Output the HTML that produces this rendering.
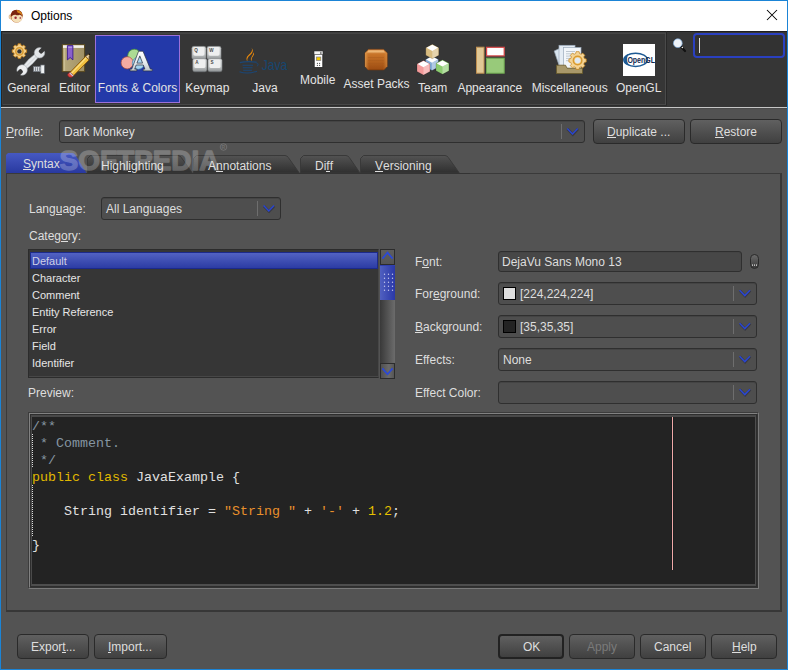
<!DOCTYPE html>
<html><head><meta charset="utf-8">
<style>
*{box-sizing:border-box;margin:0;padding:0}
html,body{width:788px;height:670px;overflow:hidden;background:#535353;font-family:"Liberation Sans",sans-serif;font-size:12px;color:#dedede}
.a{position:absolute}
.t{position:absolute;white-space:nowrap;line-height:14px}
u{text-decoration:none;position:relative}u::after{content:'';position:absolute;left:0;right:0;top:12px;height:1px;background:currentColor}
#win{left:0;top:0;width:788px;height:670px;border:1px solid #1b84d6;border-top-color:#1b84d6}
#title{left:1px;top:1px;width:786px;height:30px;background:#fff}
#tb{left:1px;top:31px;width:786px;height:76px;background:#363636}
#grp{left:1px;top:31px;width:666px;height:75px;border-right:1px solid #4a4a4a;border-bottom:1px solid #464646;box-shadow:1px 1px 0 #262626;border-radius:0 0 3px 0}
#tbline{left:1px;top:107px;width:786px;height:1px;background:#c6c6c6}
.lbl{position:absolute;white-space:nowrap;font-size:12px;line-height:14px;color:#e4e4e4;transform:translateX(-50%)}
.combo{position:absolute;background:#4e4e4e;border:1px solid #2f2f2f;border-radius:3px;box-shadow:inset 0 1px 0 #444}
.combo .sep{position:absolute;top:3px;bottom:3px;width:1px;background:#6e6e6e}
.chev{position:absolute;width:12px;height:8px}
.btn{position:absolute;border:1px solid #2a2a2a;border-radius:4px;background:linear-gradient(#606060,#404040);color:#e6e6e6;text-align:center}
.tab{position:absolute}
.code{position:absolute;font-family:"Liberation Mono",monospace;font-size:13.33px;white-space:pre;line-height:17px}
</style></head><body>
<div id="win" class="a"></div>
<div id="title" class="a"></div>
<div class="t" style="left:31px;top:9px;color:#000">Options</div>
<!-- close X -->
<svg class="a" style="left:766px;top:9px" width="13" height="13"><path d="M1 1L11 11M11 1L1 11" stroke="#000" stroke-width="1.05"/></svg>

<div id="tb" class="a"></div>
<div class="a" style="left:1px;top:31px;width:786px;height:1px;background:#1e1e1e"></div>
<div class="a" style="left:2px;top:32px;width:664px;height:2px;background:linear-gradient(#3a3a3a,#474747)"></div>
<div class="a" style="left:1px;top:31px;width:1px;height:76px;background:#262626"></div>
<div class="a" style="left:2px;top:32px;width:1px;height:73px;background:#3c3c3c"></div>
<div class="a" style="left:665px;top:33px;width:1px;height:72px;background:#4a4a4a"></div>
<div class="a" style="left:666px;top:31px;width:1px;height:75px;background:#282828"></div>
<div class="a" style="left:3px;top:104px;width:662px;height:1px;background:#474747"></div>
<div class="a" style="left:2px;top:105px;width:665px;height:1px;background:#2c2c2c"></div>
<div class="a" style="left:1px;top:108px;width:786px;height:1px;background:#4b4b4b"></div>
<div id="tbline" class="a"></div>

<!-- selected toolbar button -->
<div class="a" style="left:95px;top:35px;width:85px;height:68px;background:#2339a9;border:1px solid #9c70d8"></div>

<div class="lbl" style="left:28.5px;top:81px">General</div>
<div class="lbl" style="left:74.6px;top:81px">Editor</div>
<div class="lbl" style="left:137.5px;top:81px">Fonts &amp; Colors</div>
<div class="lbl" style="left:207.3px;top:81px">Keymap</div>
<div class="lbl" style="left:265px;top:81px">Java</div>
<div class="lbl" style="left:317.7px;top:73px">Mobile</div>
<div class="lbl" style="left:376.6px;top:77px">Asset Packs</div>
<div class="lbl" style="left:432.7px;top:81px">Team</div>
<div class="lbl" style="left:489.8px;top:81px">Appearance</div>
<div class="lbl" style="left:569.7px;top:81px">Miscellaneous</div>
<div class="lbl" style="left:638.7px;top:81px">OpenGL</div>


<!-- title icon -->
<svg class="a" style="left:8px;top:8px" width="16" height="16" viewBox="0 0 16 16">
<ellipse cx="2.6" cy="8.8" rx="1.6" ry="2.2" fill="#f2d9b0" stroke="#c89060" stroke-width="0.5"/>
<ellipse cx="8.6" cy="8.2" rx="6" ry="6.3" fill="#b85a20"/>
<path d="M2.8 8Q3 1.8 8.6 1.8Q14.4 2 14.5 8Z" fill="#7a2410"/>
<path d="M8.5 2Q13.8 2.4 14.4 7.5Q12 5 9.5 4.6Z" fill="#d8861c"/>
<path d="M3.4 9.5Q4 6.6 7.5 6.8Q9.5 7.8 11.5 6.8Q14 7 14.3 9.8Q14 14.2 8.8 14.4Q3.8 14.2 3.4 9.5Z" fill="#f4e0b8"/>
<circle cx="7.6" cy="9.8" r="1.2" fill="#9a2838"/><circle cx="12.3" cy="10" r="0.9" fill="#b05060"/>
</svg>

<!-- General -->
<svg class="a" style="left:8px;top:40px" width="40" height="38" viewBox="0 0 40 38">
<g transform="translate(11.4 11.4)">
<g fill="#f2cf8a" stroke="#c07a10" stroke-width="0.9">
<path d="M-1.6 -7.2H1.6L2 -5.3L3.6 -4.6L5.2 -5.7L7.4 -3.4L6.3 -1.8L6.9 -0.2L8.8 0.2V3.4L6.9 3.8L6.3 5.4L7.4 7L5.2 9.2L3.6 8.1L2 8.8L1.6 10.7H-1.6L-2 8.8L-3.6 8.1L-5.2 9.2L-7.4 7L-6.3 5.4L-6.9 3.8L-8.8 3.4V0.2L-6.9 -0.2L-6.3 -1.8L-7.4 -3.4L-5.2 -5.7L-3.6 -4.6L-2 -5.3Z" transform="translate(0 -1.75) scale(0.82)"/>
</g>
<circle cx="0" cy="0" r="3.6" fill="none" stroke="#d89a30" stroke-width="1.6"/>
<circle cx="0" cy="0" r="2.2" fill="#363636"/>
</g>
<g transform="translate(22.8 21.4) rotate(-44.5) scale(0.86)">
<path d="M-11 -2.6L0 -3.4L11 -2.6V2.6L0 3.4L-11 2.6Z" fill="#e6e9ec" stroke="#9aa0a6" stroke-width="0.6"/>
<circle cx="-14.2" cy="0" r="6.1" fill="#eceef0" stroke="#9aa0a6" stroke-width="0.6"/>
<circle cx="14.2" cy="0" r="6.1" fill="#e2e5e8" stroke="#9aa0a6" stroke-width="0.6"/>
<path d="M-21 -2.6H-16Q-14.3 -2.6 -14.3 0Q-14.3 2.6 -16 2.6H-21Z" fill="#363636"/>
<path d="M21 -2.6H16Q14.3 -2.6 14.3 0Q14.3 2.6 16 2.6H21Z" fill="#363636"/>
<path d="M-8 0.3H8" stroke="#c4c9ce" stroke-width="0.8"/>
</g>
<rect x="25.5" y="26.6" width="8" height="5" fill="#d4d8dc" stroke="#6a7078" stroke-width="0.7"/>
<rect x="32.8" y="25" width="3.6" height="8.4" fill="#eef1f3" stroke="#6a7078" stroke-width="0.7"/>
<path d="M27.5 27.3v3.6M29.5 27.3v3.6M31.5 27.3v3.6" stroke="#7a8088" stroke-width="0.9"/>
</svg>

<!-- Editor -->
<svg class="a" style="left:55px;top:40px" width="40" height="38" viewBox="0 0 40 38">
<defs><linearGradient id="bk" x1="0" y1="0" x2="1" y2="0"><stop offset="0" stop-color="#b8aa7c"/><stop offset="1" stop-color="#a09064"/></linearGradient></defs>
<rect x="7.3" y="4.6" width="22.3" height="27" fill="url(#bk)" stroke="#5a4a20" stroke-width="1"/>
<rect x="8" y="5.3" width="21" height="2.6" fill="#f2f0ea"/>
<path d="M9.6 8.5V31" stroke="#d0c498" stroke-width="0.9"/>
<path d="M12.4 5.6H17.9V19.9L15.15 17.5L12.4 19.9Z" fill="#8a60cc" stroke="#3a1a90" stroke-width="0.9"/>
<path d="M13.2 7.2H17.1" stroke="#c0a8f0" stroke-width="1"/>
<path d="M15.2 32.2L30.6 16.4L34.2 19.8L18.7 35.6Z" fill="#f0c040" stroke="#7a4a08" stroke-width="0.8"/>
<path d="M16.4 33.3L31.4 17.6" stroke="#fae08a" stroke-width="1.1"/>
<path d="M30.6 16.4L33.2 14.6L34.6 14L34 16.9L34.2 19.8Z" fill="#eadcb8" stroke="#7a4a08" stroke-width="0.7"/>
<circle cx="34.4" cy="14.2" r="0.8" fill="#111"/>
<path d="M15.2 32.2L18.7 35.6L16.6 37.3Q14 37.6 13 36Q12.2 34.6 13.2 33.6Z" fill="#e04848" stroke="#8a2020" stroke-width="0.7"/>
<path d="M14.7 32.7L18.2 36.1" stroke="#c8d0d8" stroke-width="1.3"/>
</svg>

<!-- Fonts & Colors -->
<svg class="a" style="left:117px;top:44px" width="40" height="32" viewBox="0 0 40 32">
<defs><linearGradient id="ag3" x1="0" y1="0" x2="0" y2="1"><stop offset="0" stop-color="#ffffff"/><stop offset="0.55" stop-color="#e8ecf0"/><stop offset="1" stop-color="#c0c6cc"/></linearGradient></defs>
<circle cx="17.3" cy="11.8" r="6.6" fill="#acdc94" stroke="#4c9832" stroke-width="0.7"/>
<circle cx="10.2" cy="18.8" r="6.1" fill="#f6aaa2" stroke="#b04a3a" stroke-width="0.7"/>
<circle cx="21.3" cy="19.3" r="6" fill="#a6d4ee" stroke="#4a86ae" stroke-width="0.7"/>
<path fill-rule="evenodd" d="M21.6 7.2H26L33.4 25.1H35.2V26.9H26.2V25.1H27.9L26.3 21H19.2L17.7 25.1H19.8V26.9H13V25.1H14.7ZM19.9 19.1H25.6L22.8 11.9Z" fill="url(#ag3)" stroke="#2a3040" stroke-width="0.7" stroke-linejoin="round"/>
</svg>

<!-- Keymap -->
<svg class="a" style="left:187px;top:42px" width="40" height="36" viewBox="0 0 40 36">
<defs>
<linearGradient id="kg" x1="0" y1="0" x2="0" y2="1"><stop offset="0" stop-color="#d8dadb"/><stop offset="0.6" stop-color="#c4c7c8"/><stop offset="1" stop-color="#8c9092"/></linearGradient>
<g id="key2"><rect x="0" y="0" width="14.2" height="13.2" rx="2" fill="url(#kg)" stroke="#6c7072" stroke-width="0.5"/><rect x="1.6" y="0.8" width="11" height="8.6" rx="1.6" fill="#eeefef"/></g>
</defs>
<use href="#key2" x="4.8" y="4.3"/><use href="#key2" x="19.9" y="4.3"/>
<use href="#key2" x="5.7" y="16.6"/><use href="#key2" x="20.9" y="16.6"/>
<g font-size="4.6" font-family="Liberation Sans" fill="#4a4a4a" font-weight="bold">
<text x="7.2" y="10">Q</text><text x="22.2" y="10">W</text><text x="8.2" y="22.3">A</text><text x="23.4" y="22.3">S</text>
</g>
</svg>

<!-- Java -->
<svg class="a" style="left:236px;top:44px" width="60" height="32" viewBox="0 0 60 32">
<path d="M15.5 3.5Q17.5 7 12.5 11Q9 14 11.5 17.8Q10.3 14 14.3 11Q18.5 7.8 15.5 3.5Z" fill="#e8880c"/>
<path d="M17.6 8.3Q17 11 15.8 12.6Q14 15 15.4 17.5Q14.8 14.2 17.2 12Q18.8 10.3 17.6 8.3Z" fill="#e8880c"/>
<path d="M3.8 18.6Q11 16.8 20.5 18.2" stroke="#1b4777" stroke-width="1.2" fill="none"/>
<path d="M6.5 21.2H17M6.8 23.7H16.5M7.2 26.2H16" stroke="#1b4777" stroke-width="1.1"/>
<path d="M3.5 27.8Q11 30.6 21 27.2" stroke="#1b4777" stroke-width="1.1" fill="none"/>
<path d="M20.2 18.8Q23.5 19.5 21.2 22.3" stroke="#1b4777" stroke-width="0.9" fill="none"/>
<text x="25.8" y="26.2" font-size="14.5" font-family="Liberation Sans" fill="#174670" textLength="25.5" lengthAdjust="spacingAndGlyphs">Java</text>
</svg>

<!-- Mobile -->
<svg class="a" style="left:306px;top:46px" width="24" height="26" viewBox="0 0 24 26">
<rect x="8.2" y="5.5" width="8.6" height="16" fill="#fff" stroke="#222" stroke-width="0.8"/>
<rect x="8" y="5" width="9" height="3.5" fill="#f4f4f4" stroke="#333" stroke-width="0.6"/>
<rect x="14" y="5.8" width="1.6" height="2.4" fill="#888"/>
<rect x="10.3" y="11" width="4.5" height="3.4" fill="#f2c800" stroke="#7a7a8a" stroke-width="0.7"/>
<circle cx="11.4" cy="17.3" r="0.6" fill="#444"/><circle cx="13.6" cy="17.3" r="0.6" fill="#444"/>
<circle cx="11.4" cy="19.3" r="0.6" fill="#444"/><circle cx="13.6" cy="19.3" r="0.6" fill="#444"/>
</svg>

<!-- Asset Packs -->
<svg class="a" style="left:360px;top:44px" width="32" height="30" viewBox="0 0 32 30">
<defs><linearGradient id="ag" x1="0" y1="0" x2="0" y2="1"><stop offset="0" stop-color="#e0a060"/><stop offset="0.25" stop-color="#c87428"/><stop offset="1" stop-color="#9c4c12"/></linearGradient>
<linearGradient id="ag2" x1="0" y1="0" x2="1" y2="0"><stop offset="0" stop-color="#f0b060" stop-opacity="0.7"/><stop offset="0.2" stop-color="#c87428" stop-opacity="0"/><stop offset="0.8" stop-color="#c87428" stop-opacity="0"/><stop offset="1" stop-color="#e8a050" stop-opacity="0.6"/></linearGradient></defs>
<path d="M8.5 5.3H23.5L27.2 9V22.3L23.8 25.9H8.2L5 22.3V9Z" fill="url(#ag)" stroke="#7a3a0c" stroke-width="0.7"/>
<path d="M8.5 5.3H23.5L27.2 9V22.3L23.8 25.9H8.2L5 22.3V9Z" fill="url(#ag2)"/>
<path d="M8.5 6.5H23.5L25 8.5H7Z" fill="#f2c080" opacity="0.8"/>
<path d="M8 13.5H24M8 16.5H24M8 19.5H24" stroke="#a85a1c" stroke-width="0.6" opacity="0.7"/>
</svg>

<!-- Team -->
<svg class="a" style="left:413px;top:40px" width="40" height="38" viewBox="0 0 40 38">
<defs><g id="cube"><path d="M6.5 0L13 3.5V11L6.5 14.5L0 11V3.5Z" fill="currentColor" stroke="#000" stroke-opacity="0.25" stroke-width="0.6"/><path d="M6.5 0.6L12.3 3.6L6.5 6.8L0.7 3.6Z" fill="#fff"/><path d="M6.5 6.8V14.3L12.5 11V3.8Z" fill="#fff" fill-opacity="0.35"/></g></defs>
<use href="#cube" x="12.5" y="16" style="color:#88aed8"/>
<use href="#cube" x="12.8" y="4.2" style="color:#d8bc80"/>
<use href="#cube" x="4" y="20.5" style="color:#f49a9a"/>
<use href="#cube" x="23" y="19.8" style="color:#8ccc70"/>
</svg>

<!-- Appearance -->
<svg class="a" style="left:472px;top:42px" width="38" height="36" viewBox="0 0 38 36">
<rect x="4.5" y="5.2" width="7.5" height="26" fill="#e0c896" stroke="#c09050" stroke-width="1"/>
<rect x="14.6" y="5.3" width="17.6" height="8.6" fill="#fff" stroke="#d84848" stroke-width="1.2"/>
<rect x="14.5" y="16.2" width="17.7" height="15" fill="#98ca7a" stroke="#70a850" stroke-width="1"/>
</svg>

<!-- Miscellaneous -->
<svg class="a" style="left:550px;top:40px" width="40" height="38" viewBox="0 0 40 38">
<path d="M4.2 11L9.5 8.5L15 26L10 28Z" fill="#d8e4ee" stroke="#9aa8b8" stroke-width="0.7"/>
<rect x="9" y="5.3" width="16" height="21" fill="#e4ecf4" stroke="#9aaabb" stroke-width="0.7"/>
<rect x="13.5" y="7.5" width="17.5" height="21" fill="#f2f6fa" stroke="#9aaabb" stroke-width="0.7"/>
<path d="M16 11.5H25M16 13.8H24M16 16.1H23M16 18.4H22M16 20.7H21" stroke="#9aa8b4" stroke-width="0.6"/>
<path d="M6.5 25.2H15.5L17 28.2H32.5V33.5H6.5Z" fill="#a8986a" stroke="#6a5a2a" stroke-width="0.8"/>
<g transform="translate(27.6 20.5)">
<g stroke="#c07c10" stroke-width="0.8" fill="#f4d496">
<path d="M-1.9 -8.6H1.9L2.3 -6.3L4.3 -5.4L6.2 -6.8L8.9 -4.1L7.5 -2.2L8.4 -0.1L10.6 0.3V4.1L8.4 4.5L7.5 6.6L8.9 8.5L6.2 11.2L4.3 9.8L2.3 10.7L1.9 13H-1.9L-2.3 10.7L-4.3 9.8L-6.2 11.2L-8.9 8.5L-7.5 6.6L-8.4 4.5L-10.6 4.1V0.3L-8.4 -0.1L-7.5 -2.2L-8.9 -4.1L-6.2 -6.8L-4.3 -5.4L-2.3 -6.3Z" transform="translate(0 -1.8) scale(0.82)"/>
</g>
<circle r="4.2" fill="none" stroke="#d89a30" stroke-width="1.6"/>
<circle r="2.8" fill="#dfe8f2"/>
</g>
</svg>

<!-- OpenGL -->
<svg class="a" style="left:618px;top:40px" width="42" height="40" viewBox="0 0 42 40">
<rect x="5" y="4" width="32" height="32" fill="#fff"/>
<ellipse cx="17.6" cy="19.8" rx="11.8" ry="6.6" fill="none" stroke="#1d5a94" stroke-width="1.5"/>
<path d="M6.2 19.8Q6.2 15 12 13.6Q8.8 16 9 19.8Q9.2 23.6 12.5 26Q6.2 24.6 6.2 19.8Z" fill="#1d5a94"/>
<text x="9.4" y="23.3" font-size="8.8" font-weight="bold" font-family="Liberation Sans" fill="#0e2850" textLength="27.6" lengthAdjust="spacingAndGlyphs">OpenGL</text>
<rect x="37" y="4" width="5" height="32" fill="#363636"/>
</svg>

<!-- search magnifier -->
<svg class="a" style="left:668px;top:34px" width="24" height="22" viewBox="0 0 24 22">
<path d="M12.8 12.6L17 17" stroke="#111" stroke-width="2.2" stroke-linecap="round"/>
<circle cx="9.8" cy="9.2" r="4.4" fill="#eef2f8" stroke="#7aa8d8" stroke-width="0.7"/>
<circle cx="14.3" cy="13.5" r="0.7" fill="#fff"/>
</svg>

<!-- search -->
<div class="a" style="left:693px;top:33px;width:92px;height:25px;border:2px solid #2a40c0;border-radius:4px;background:#323232"></div>
<div class="a" style="left:699px;top:38px;width:1px;height:15px;background:#ddd"></div>

<!-- profile row -->
<div class="t" style="left:6px;top:125px"><u>P</u>rofile:</div>
<div class="combo" style="left:59px;top:120px;width:526px;height:23px"><div class="sep" style="left:501px"></div></div>
<div class="t" style="left:64px;top:125px">Dark Monkey</div>
<div class="btn" style="left:593px;top:119px;width:92px;height:25px"></div>
<div class="t" style="left:607px;top:125px"><u>D</u>uplicate ...</div>
<div class="btn" style="left:690px;top:119px;width:92px;height:25px"></div>
<div class="t" style="left:715px;top:125px"><u>R</u>estore</div>

<!-- panel -->
<div class="a" style="left:6px;top:173px;width:776px;height:439px;border-left:1px solid #3a3a3a;border-top:1px solid #3a3a3a;border-right:2px solid #373737;border-bottom:2px solid #373737"></div>


<!-- tabs -->
<svg class="a" style="left:0;top:150px" width="470" height="25" viewBox="0 150 470 25">
<defs>
<linearGradient id="tg" x1="0" y1="0" x2="0" y2="1"><stop offset="0" stop-color="#535353"/><stop offset="1" stop-color="#2f2f2f"/></linearGradient>
<linearGradient id="sg" x1="0" y1="0" x2="0" y2="1"><stop offset="0" stop-color="#4659c2"/><stop offset="1" stop-color="#2939a0"/></linearGradient>
</defs>
<path d="M87.5 173V158.5L90.5 155.5H178Q180 155.5 181.3 157.5L192 172.5V173Z" fill="url(#tg)" stroke="#393939" stroke-width="1"/>
<path d="M193.5 173V158.5L196.5 155.5H285Q287 155.5 288.3 157.5L299 172.5V173Z" fill="url(#tg)" stroke="#393939" stroke-width="1"/>
<path d="M300.5 173V158.5L303.5 155.5H346Q348 155.5 349.3 157.5L359.7 172.5V173Z" fill="url(#tg)" stroke="#393939" stroke-width="1"/>
<path d="M360.5 173V158.5L363.5 155.5H445Q447 155.5 448.3 157.5L459 172.5V173Z" fill="url(#tg)" stroke="#393939" stroke-width="1"/>
<path d="M6 173V155L8 153H72Q74 153 75.5 155.2L86.5 173Z" fill="url(#sg)"/>
<path d="M86 173.5H470" stroke="#333" stroke-width="1"/>
</svg>
<div class="t" style="left:23px;top:157px"><u>S</u>yntax</div>
<div class="t" style="left:101px;top:159px">Highl<u>i</u>ghting</div>
<div class="t" style="left:208px;top:159px">A<u>n</u>notations</div>
<div class="t" style="left:315px;top:159px">Di<u>f</u>f</div>
<div class="t" style="left:375px;top:159px"><u>V</u>ersioning</div>

<div class="t" style="left:29px;top:202px">Lang<u>u</u>age:</div>
<div class="combo" style="left:101px;top:197px;width:180px;height:23px"><div class="sep" style="left:155px"></div></div>
<div class="t" style="left:106px;top:202px">All Languages</div>
<div class="t" style="left:29px;top:229px">Categ<u>o</u>ry:</div>


<!-- category list -->
<div class="a" style="left:28px;top:249px;width:351px;height:129px;background:#363636;border:1px solid #2c2c2c;border-right:1px solid #474747"></div>
<div class="a" style="left:29px;top:376px;width:349px;height:1px;background:#474747"></div>
<div class="a" style="left:30px;top:252px;width:348px;height:17px;background:linear-gradient(#5262c2,#2c3ca4);border:1px solid #1c2a8a"></div>
<div class="a" style="left:32px;top:255px;font-size:11px;line-height:13px;color:#d0d0e8">Default</div>
<div class="a" style="left:32px;top:272px;font-size:11px;line-height:13px;color:#e6e6e6">Character</div>
<div class="a" style="left:32px;top:289px;font-size:11px;line-height:13px;color:#e6e6e6">Comment</div>
<div class="a" style="left:32px;top:306px;font-size:11px;line-height:13px;color:#e6e6e6">Entity Reference</div>
<div class="a" style="left:32px;top:323px;font-size:11px;line-height:13px;color:#e6e6e6">Error</div>
<div class="a" style="left:32px;top:340px;font-size:11px;line-height:13px;color:#e6e6e6">Field</div>
<div class="a" style="left:32px;top:357px;font-size:11px;line-height:13px;color:#e6e6e6">Identifier</div>
<!-- scrollbar -->
<div class="a" style="left:380px;top:249px;width:15px;height:130px;background:linear-gradient(90deg,#393939,#6c6c6c)"></div>
<div class="a" style="left:380px;top:249px;width:15px;height:16px;background:linear-gradient(#5e5e5e,#555);border:1px solid #2c2c2c"></div>
<div class="a" style="left:380px;top:363px;width:15px;height:16px;background:linear-gradient(90deg,#505050,#6a6a6a 60%,#555);border:1px solid #2c2c2c"></div>
<svg class="a" style="left:380px;top:249px" width="15" height="130" viewBox="0 0 15 130">
<path d="M2.4 9.6L7.5 3.6L12.6 9.6" stroke="#2a48d8" stroke-width="1.7" fill="none"/>
<path d="M2.4 119.4L7.5 125.2L12.6 119.4" stroke="#2a48d8" stroke-width="1.7" fill="none"/>
</svg>
<div class="a" style="left:380px;top:265px;width:15px;height:35px;background:linear-gradient(90deg,#5060c0,#2a38a8);border-top:1px solid #3040b0"></div>
<svg class="a" style="left:380px;top:265px" width="15" height="35" viewBox="0 0 15 35">
<g fill="#c4c8ec"><circle cx="4.5" cy="9.3" r="0.7"/><circle cx="8.5" cy="9.3" r="0.7"/><circle cx="12.5" cy="9.3" r="0.7"/>
<circle cx="4.5" cy="13.3" r="0.7"/><circle cx="8.5" cy="13.3" r="0.7"/><circle cx="12.5" cy="13.3" r="0.7"/>
<circle cx="4.5" cy="17.3" r="0.7"/><circle cx="8.5" cy="17.3" r="0.7"/><circle cx="12.5" cy="17.3" r="0.7"/>
<circle cx="4.5" cy="21.3" r="0.7"/><circle cx="8.5" cy="21.3" r="0.7"/><circle cx="12.5" cy="21.3" r="0.7"/>
<circle cx="4.5" cy="25.3" r="0.7"/><circle cx="8.5" cy="25.3" r="0.7"/><circle cx="12.5" cy="25.3" r="0.7"/></g>
</svg>

<div class="t" style="left:28px;top:386px">Preview:</div>

<div class="t" style="left:415px;top:255px">F<u>o</u>nt:</div>
<div class="t" style="left:415px;top:287px">For<u>e</u>ground:</div>
<div class="t" style="left:415px;top:320px"><u>B</u>ackground:</div>
<div class="t" style="left:415px;top:353px">Effects:</div>
<div class="t" style="left:415px;top:386px">Effect Color:</div>

<div class="combo" style="left:498px;top:251px;width:244px;height:21px;background:#474747"></div>
<div class="t" style="left:502px;top:255px">DejaVu Sans Mono 13</div>
<div class="combo" style="left:498px;top:282px;width:259px;height:23px"><div class="sep" style="left:234px"></div></div>
<div class="combo" style="left:498px;top:315px;width:259px;height:23px"><div class="sep" style="left:234px"></div></div>
<div class="combo" style="left:498px;top:348px;width:259px;height:23px"><div class="sep" style="left:234px"></div></div>
<div class="combo" style="left:498px;top:381px;width:259px;height:23px"><div class="sep" style="left:234px"></div></div>
<div class="a" style="left:503px;top:287px;width:13px;height:13px;border:1px solid #000;background:#e0e0e0"></div>
<div class="t" style="left:520px;top:287px">[224,224,224]</div>
<div class="a" style="left:503px;top:320px;width:13px;height:13px;border:1px solid #000;background:#232323"></div>
<div class="t" style="left:520px;top:320px">[35,35,35]</div>
<div class="t" style="left:503px;top:353px">None</div>

<!-- preview editor -->
<div class="a" style="left:28px;top:412px;width:731px;height:177px;border:1px solid #3c3c3c;border-right-color:#7a7a7a;border-bottom-color:#7a7a7a"></div>
<div class="a" style="left:29px;top:413px;width:729px;height:175px;border:1px solid #828282;border-right-color:#333;border-bottom-color:#333"></div>
<div class="a" style="left:30px;top:414px;width:727px;height:173px;border:1px solid #2e2e2e"></div>
<div class="a" style="left:31px;top:415px;width:725px;height:171px;border-left:1px solid #4a4a4a;border-top:2px solid #494949;border-right:1px solid #4e4e4e;border-bottom:2px solid #4e4e4e;background:#232323"></div>
<div class="a" style="left:671px;top:417px;width:3px;height:153px;background:#1a1e1e"></div>
<div class="a" style="left:672px;top:417px;width:1px;height:153px;background:#f0a8a8"></div>
<div class="code" style="left:32px;top:418px;color:#8696a2">/**
 * Comment.
 */</div>
<div class="code" style="left:32px;top:469px;color:#e0e0e0"><span style="color:#e0b800">public class</span> JavaExample {

    String identifier = <span style="color:#e8902c">"String "</span> + <span style="color:#e8902c">'-'</span> + <span style="color:#e6c000">1.2</span>;

}</div>

<!-- bottom buttons -->
<div class="btn" style="left:17px;top:634px;width:72px;height:25px"></div>
<div class="t" style="left:31px;top:640px">Expor<u>t</u>...</div>
<div class="btn" style="left:94px;top:634px;width:73px;height:25px"></div>
<div class="t" style="left:108px;top:640px"><u>I</u>mport...</div>
<div class="btn" style="left:498px;top:634px;width:66px;height:25px;border:2px solid #222"></div>
<div class="t" style="left:523px;top:640px">OK</div>
<div class="btn" style="left:569px;top:634px;width:66px;height:25px"></div>
<div class="t" style="left:587px;top:640px;color:#7a7a7a">Apply</div>
<div class="btn" style="left:640px;top:634px;width:66px;height:25px"></div>
<div class="t" style="left:654px;top:640px">Cancel</div>
<div class="btn" style="left:711px;top:634px;width:66px;height:25px"></div>
<div class="t" style="left:732px;top:640px"><u>H</u>elp</div>


<!-- chevrons -->
<svg class="a" style="left:0;top:0" width="788" height="670" viewBox="0 0 788 670" fill="none">
<path d="M567.3 128.5L572.5 134L577.7 128.5 M263.6 205.6L268.8 211L274 205.6 M739.6 290.2L744.8 295.6L750 290.2 M739.6 323.2L744.8 328.6L750 323.2 M739.6 356.2L744.8 361.6L750 356.2 M739.6 389.2L744.8 394.6L750 389.2" stroke="#202030" stroke-opacity="0.45" stroke-width="2.6" transform="translate(0.3 0.5)"/>
<path d="M567.3 128.5L572.5 134L577.7 128.5 M263.6 205.6L268.8 211L274 205.6 M739.6 290.2L744.8 295.6L750 290.2 M739.6 323.2L744.8 328.6L750 323.2 M739.6 356.2L744.8 361.6L750 356.2 M739.6 389.2L744.8 394.6L750 389.2" stroke="#2a46d0" stroke-width="1.5"/>
</svg>
<!-- font ... button -->
<div class="a" style="left:750px;top:254px;width:9px;height:15px;border-radius:4.5px;background:linear-gradient(#6a6a6a,#3a3a3a);border:1px solid #2a2a2a"></div>
<svg class="a" style="left:750px;top:254px" width="9" height="15"><g fill="#eee"><rect x="2" y="10.5" width="1" height="1.2"/><rect x="4" y="10.5" width="1" height="1.2"/><rect x="6" y="10.5" width="1" height="1.2"/></g></svg>
<!-- fold guide dots -->
<div class="a" style="left:32px;top:434px;width:1px;height:34px;background:repeating-linear-gradient(#ddd 0 1px,transparent 1px 2px)"></div>
<div class="a" style="left:32px;top:485px;width:1px;height:51px;background:repeating-linear-gradient(#ddd 0 1px,transparent 1px 2px)"></div>
<!-- watermark -->
<svg class="a" style="left:0;top:130px" width="260" height="50" viewBox="0 130 260 50">
<g opacity="0.23" fill="#fff" stroke="#fff" stroke-width="1.3" stroke-linejoin="round">
<text x="59.5" y="169.5" font-family="Liberation Sans" font-weight="bold" font-size="28" textLength="160" lengthAdjust="spacingAndGlyphs">SOFTPEDIA</text>
</g>
<g opacity="0.16" fill="none" stroke="#fff" stroke-width="1">
<circle cx="223.5" cy="147" r="3.3"/>
</g>
<text x="221.6" y="149.2" font-family="Liberation Sans" font-weight="bold" font-size="5" fill="#fff" opacity="0.16">R</text>
</svg>
</body></html>
